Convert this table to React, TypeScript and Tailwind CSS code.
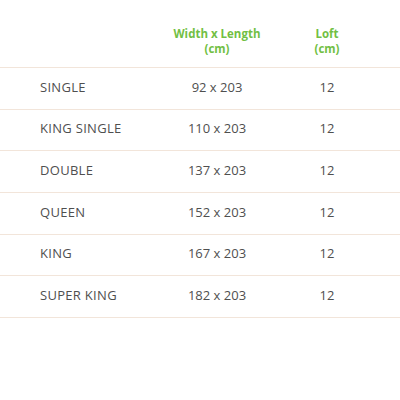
import React from "react";

const rows = [
  { name: "SINGLE", size: "92 x 203", loft: "12" },
  { name: "KING SINGLE", size: "110 x 203", loft: "12" },
  { name: "DOUBLE", size: "137 x 203", loft: "12" },
  { name: "QUEEN", size: "152 x 203", loft: "12" },
  { name: "KING", size: "167 x 203", loft: "12" },
  { name: "SUPER KING", size: "182 x 203", loft: "12" },
];

export default function App() {
  return (
    <div className="w-[400px] h-[400px] bg-white pt-[26px] font-['Open_Sans',sans-serif]">
      {/* header */}
      <div className="grid grid-cols-[157px_120px_100px] h-[42px] border-b border-[#f2e5da] text-[11.5px] font-bold leading-[15px] text-[#72bf44]">
        <div />
        <div className="text-center">
          Width x Length
          <br />
          (cm)
        </div>
        <div className="text-center">
          Loft
          <br />
          (cm)
        </div>
      </div>

      {rows.map((r) => (
        <div
          key={r.name}
          className="grid grid-cols-[157px_120px_100px] h-[41.7px] items-center pb-[2px] border-b border-[#f2e5da] text-[13px] text-[#4f4f4f]"
        >
          <div className="pl-10 tracking-[0.3px]">{r.name}</div>
          <div className="text-center">{r.size}</div>
          <div className="text-center">{r.loft}</div>
        </div>
      ))}
    </div>
  );
}
